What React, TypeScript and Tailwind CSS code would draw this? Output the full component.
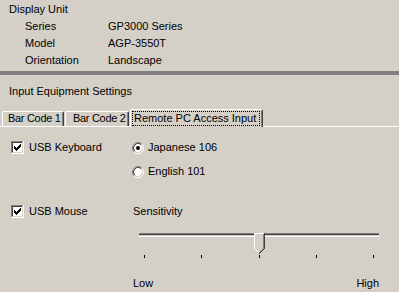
import React from "react";

const CheckBox = () => (
  <svg width="13" height="13" viewBox="0 0 13 13" shapeRendering="crispEdges" className="shrink-0">
    <rect x="0" y="0" width="13" height="13" fill="#ffffff" />
    <rect x="0" y="0" width="12" height="1" fill="#808080" />
    <rect x="0" y="0" width="1" height="12" fill="#808080" />
    <rect x="1" y="1" width="10" height="1" fill="#404040" />
    <rect x="1" y="1" width="1" height="10" fill="#404040" />
    <rect x="1" y="11" width="11" height="1" fill="#d4d0c8" />
    <rect x="11" y="1" width="1" height="11" fill="#d4d0c8" />
    <rect x="0" y="12" width="13" height="1" fill="#ffffff" />
    <rect x="12" y="0" width="1" height="13" fill="#ffffff" />
    <rect x="3" y="5" width="1" height="3" fill="#000" />
    <rect x="4" y="6" width="1" height="3" fill="#000" />
    <rect x="5" y="7" width="1" height="3" fill="#000" />
    <rect x="6" y="6" width="1" height="3" fill="#000" />
    <rect x="7" y="5" width="1" height="3" fill="#000" />
    <rect x="8" y="4" width="1" height="3" fill="#000" />
    <rect x="9" y="3" width="1" height="3" fill="#000" />
  </svg>
);

const Radio = ({ checked }: { checked?: boolean }) => (
  <svg width="12" height="12" viewBox="0 0 12 12" className="shrink-0">
    <circle cx="6" cy="6" r="4.2" fill="#ffffff" />
    <path d="M2.11 9.89 A5.5 5.5 0 0 1 9.89 2.11" fill="none" stroke="#808080" strokeWidth="1" />
    <path d="M9.89 2.11 A5.5 5.5 0 0 1 2.11 9.89" fill="none" stroke="#ffffff" strokeWidth="1" />
    <path d="M2.82 9.18 A4.5 4.5 0 0 1 9.18 2.82" fill="none" stroke="#404040" strokeWidth="1" />
    <path d="M9.18 2.82 A4.5 4.5 0 0 1 2.82 9.18" fill="none" stroke="#d4d0c8" strokeWidth="1" />
    {checked && <circle cx="6" cy="6" r="2" fill="#000" />}
  </svg>
);

const Thumb = () => (
  <svg width="11" height="21" viewBox="0 0 11 21" shapeRendering="crispEdges">
    <polygon points="0,0 11,0 11,15 5.5,20.5 0,15" fill="#d4d0c8" />
    <rect x="0" y="0" width="10" height="1" fill="#ffffff" />
    <rect x="0" y="0" width="1" height="16" fill="#ffffff" />
    <rect x="10" y="0" width="1" height="16" fill="#404040" />
    <rect x="9" y="1" width="1" height="15" fill="#808080" />
    <rect x="1" y="16" width="1" height="1" fill="#ffffff" />
    <rect x="2" y="17" width="1" height="1" fill="#ffffff" />
    <rect x="3" y="18" width="1" height="1" fill="#ffffff" />
    <rect x="4" y="19" width="1" height="1" fill="#ffffff" />
    <rect x="5" y="20" width="1" height="1" fill="#404040" />
    <rect x="6" y="19" width="1" height="1" fill="#404040" />
    <rect x="7" y="18" width="1" height="1" fill="#404040" />
    <rect x="8" y="17" width="1" height="1" fill="#404040" />
    <rect x="9" y="16" width="1" height="1" fill="#404040" />
    <rect x="5" y="19" width="1" height="1" fill="#808080" />
    <rect x="6" y="18" width="1" height="1" fill="#808080" />
    <rect x="7" y="17" width="1" height="1" fill="#808080" />
    <rect x="8" y="16" width="1" height="1" fill="#808080" />
  </svg>
);

const InfoRow = ({ label, value }: { label: string; value: string }) => (
  <div className="flex h-[17px] leading-[17px]">
    <div className="w-[108px] pl-[25px]">{label}</div>
    <div>{value}</div>
  </div>
);

export default function App() {
  return (
    <div className="w-[399px] h-[292px] overflow-hidden bg-[#d4d0c8] text-black text-[11px] font-['Liberation_Sans',Arial,sans-serif] flex flex-col whitespace-nowrap">
      <div className="pt-[1px]">
        <div className="h-[17px] leading-[17px] pl-[9px]">Display Unit</div>
        <InfoRow label="Series" value="GP3000 Series" />
        <InfoRow label="Model" value="AGP-3550T" />
        <InfoRow label="Orientation" value="Landscape" />
      </div>
      <div className="mt-[2px] h-[4px] bg-[#808080]" />
      <div className="mt-[8px] h-[17px] leading-[17px] pl-[9px]">Input Equipment Settings</div>

      <div className="mt-[9px] flex items-end h-[18px] border-b border-white pl-[2px]">
        <div className="w-[62px] h-[15px] overflow-hidden border-t border-l border-r border-t-white border-l-white border-r-[#404040] rounded-tl-[2px] rounded-tr-[2px] shadow-[inset_-1px_0_0_#808080] pl-[5px] leading-[13px] tracking-[-0.3px]">
          Bar Code 1
        </div>
        <div className="ml-[1px] w-[64px] h-[15px] overflow-hidden border-t border-l border-r border-t-white border-l-white border-r-[#404040] rounded-tl-[2px] rounded-tr-[2px] shadow-[inset_-1px_0_0_#808080] pl-[7px] leading-[13px] tracking-[-0.3px]">
          Bar Code 2
        </div>
        <div className="relative z-10 ml-[1px] -mb-px w-[133px] h-[18px] bg-[#d4d0c8] border-t border-l border-r border-t-white border-l-white border-r-[#404040] rounded-tl-[2px] rounded-tr-[2px] shadow-[inset_-1px_0_0_#808080] pl-[1px]">
          <span className="inline-block border border-dotted border-black px-[1px] leading-[13px] w-[128px]">
            Remote PC Access Input
          </span>
        </div>
      </div>

      <div className="mt-[14px] flex">
        <div className="w-[132px] pl-[11px] flex items-center h-[13px] gap-[5px] leading-[13px]">
          <CheckBox />
          <span>USB Keyboard</span>
        </div>
        <div className="flex flex-col gap-[11px]">
          <div className="flex items-center h-[13px] gap-[4px] leading-[13px]">
            <Radio checked />
            <span>Japanese 106</span>
          </div>
          <div className="flex items-center h-[13px] gap-[4px] leading-[13px]">
            <Radio />
            <span>English 101</span>
          </div>
        </div>
      </div>

      <div className="mt-[27px] flex">
        <div className="w-[133px] pl-[11px] flex items-center h-[13px] gap-[5px] leading-[13px]">
          <CheckBox />
          <span>USB Mouse</span>
        </div>
        <div className="h-[13px] leading-[13px]">Sensitivity</div>
      </div>

      <div className="ml-[133px] mt-[8px] w-[246px]">
        <div className="relative h-[22px]">
          <div className="ml-[6px] mt-[7px] w-[240px] h-[4px] flex flex-col">
            <div className="h-[1px] bg-[#808080]" />
            <div className="h-[1px] bg-[#404040]" />
            <div className="h-[1px] bg-[#d4d0c8] border-r border-white" />
            <div className="h-[1px] bg-white" />
          </div>
          <div className="absolute left-[121px] top-0">
            <Thumb />
          </div>
        </div>
        <div className="ml-[11px] w-[230px] h-[3px] flex justify-between">
          <div className="w-[1px] h-[3px] bg-black" />
          <div className="w-[1px] h-[3px] bg-black" />
          <div className="w-[1px] h-[3px] bg-black" />
          <div className="w-[1px] h-[3px] bg-black" />
          <div className="w-[1px] h-[3px] bg-black" />
        </div>
        <div className="mt-[19px] flex h-[13px] leading-[13px]">
          <span className="w-[233px]">Low</span>
          <span>High</span>
        </div>
      </div>
    </div>
  );
}
